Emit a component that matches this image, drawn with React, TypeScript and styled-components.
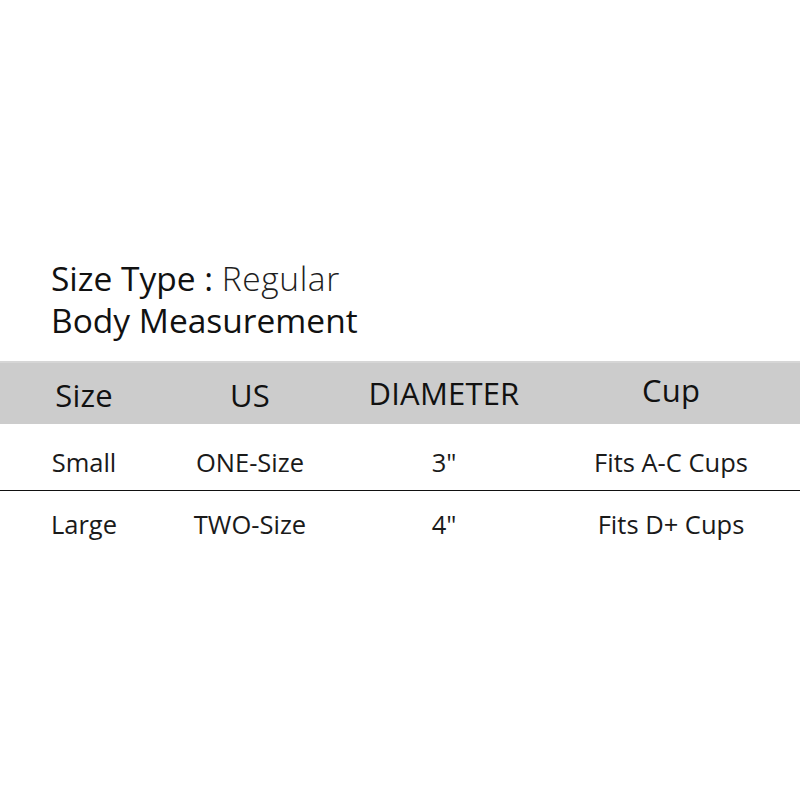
import React from 'react';
import styled, { createGlobalStyle } from 'styled-components';

interface SizeRow {
  size: string;
  us: string;
  diameter: string;
  cup: string;
  offset: number;
}

const rows: SizeRow[] = [
  { size: 'Small', us: 'ONE-Size', diameter: '3"', cup: 'Fits A-C Cups', offset: 26 },
  { size: 'Large', us: 'TWO-Size', diameter: '4"', cup: 'Fits D+ Cups', offset: 21 },
];

const headers = [
  { label: 'Size', shift: 0 },
  { label: 'US', shift: 0 },
  { label: 'DIAMETER', shift: -2 },
  { label: 'Cup', shift: -5 },
];

const App: React.FC = () => {
  return (
    <Page>
      <GlobalStyle />
      <TitleBlock>
        <TitleLine>
          Size Type : <Light>Regular</Light>
        </TitleLine>
        <TitleLine>Body Measurement</TitleLine>
      </TitleBlock>

      <HeaderRow>
        {headers.map((h) => (
          <HeaderCell key={h.label} shift={h.shift}>
            {h.label}
          </HeaderCell>
        ))}
      </HeaderRow>

      {rows.map((row, index) => (
        <BodyRow key={row.size} offset={row.offset} divided={index < rows.length - 1}>
          <Cell>{row.size}</Cell>
          <Cell>{row.us}</Cell>
          <Cell>{row.diameter}</Cell>
          <Cell>{row.cup}</Cell>
        </BodyRow>
      ))}
    </Page>
  );
};

const GlobalStyle = createGlobalStyle`
  html, body {
    margin: 0;
    padding: 0;
    background: #ffffff;
  }
  body {
    font-family: 'Open Sans', 'Noto Sans', sans-serif;
    color: #111111;
  }
`;

const Page = styled.div`
  width: 800px;
  height: 800px;
  padding-top: 257px;
  box-sizing: border-box;
  background: #ffffff;
`;

const TitleBlock = styled.div`
  padding-left: 51px;
  margin-bottom: 20px;
`;

const TitleLine = styled.div`
  font-size: 33.5px;
  line-height: 42px;
  color: #111111;
`;

const Light = styled.span`
  font-weight: 300;
  letter-spacing: 0.6px;
  color: #1e1e1e;
`;

const grid = `
  display: grid;
  grid-template-columns: 168px 164px 224px 230px 1fr;
  justify-items: center;
`;

const HeaderRow = styled.div`
  ${grid}
  align-items: center;
  height: 63px;
  background: #cccccc;
  border-top: 2px solid #d6d6d6;
  box-sizing: border-box;
`;

const HeaderCell = styled.div<{ shift: number }>`
  font-size: 31px;
  line-height: 1;
  padding-top: 3px;
  letter-spacing: 0.2px;
  transform: translateY(${(p) => p.shift}px);
  color: #111111;
`;

const BodyRow = styled.div<{ divided: boolean; offset: number }>`
  ${grid}
  align-items: start;
  height: 67px;
  padding-top: ${(p) => p.offset}px;
  box-sizing: border-box;
  border-bottom: ${(p) => (p.divided ? '1px solid #111111' : 'none')};
`;

const Cell = styled.div`
  font-size: 25.5px;
  line-height: 1;
  color: #1a1a1a;
`;

export default App;
